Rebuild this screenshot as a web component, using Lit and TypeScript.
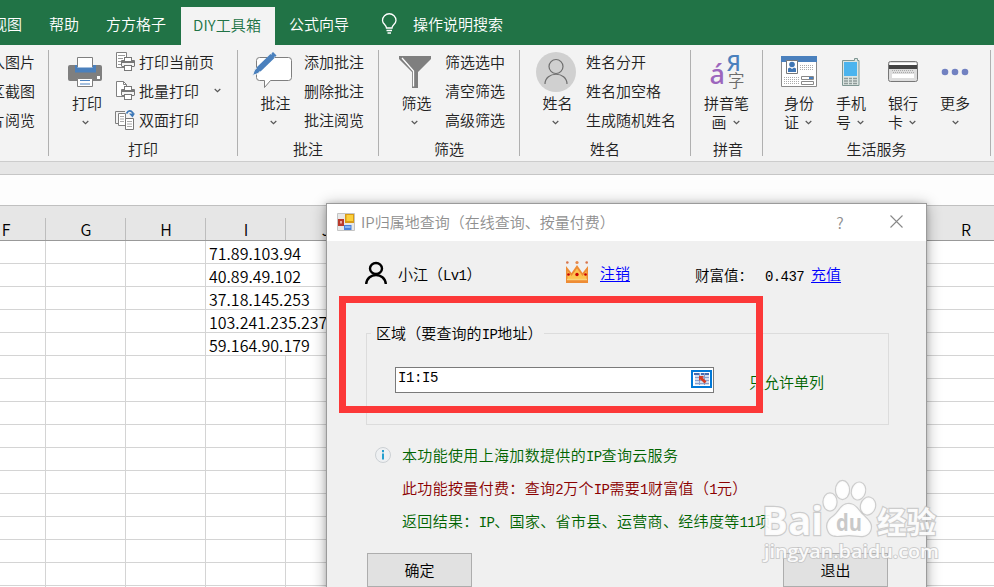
import { LitElement, html, svg, css } from "lit";
import { customElement } from "lit/decorators.js";

const chevron = html`<svg class="chev" width="7" height="5" viewBox="0 0 7 5"><path d="M.7 1 3.5 3.6 6.3 1" fill="none" stroke="#555" stroke-width="1.2"/></svg>`;

// Wraps half-width runs so they can take the narrower monospace face.
const mixed = (s: string) =>
  s.split(/([\x21-\x7e]+)/).map((p, i) => (i % 2 ? html`<span class="half">${p}</span>` : p));

const miniPrinter = svg`<path d="M5.500 14.500V8.500h13v6" fill="#f3f3f3" stroke="#777"/><rect x="8.500" y="5.500" width="7" height="4" fill="#fff" stroke="#777"/><path d="M5 9h14v2H5z" fill="#777"/><path d="M6 14.500h3m6 0h3" stroke="#777"/><rect x="8.500" y="13.500" width="7" height="5" fill="#fff" stroke="#777"/>`;
const pageIcon = html`<svg width="20" height="20" viewBox="0 0 20 20"><path d="M.5.500h10V15.500H.5z" fill="#fff" stroke="#808080"/><path d="M2 3.500h7M2 6.500h5M2 9.500h3M2 12.500h3" stroke="#999"/>${miniPrinter}</svg>`;
const batchIcon = html`<svg width="20" height="20" viewBox="0 0 20 20"><path d="M.5.500h7l3 3v12H.5z" fill="#fff" stroke="#808080"/><path d="M7.500.500v3h3" fill="none" stroke="#808080"/>${miniPrinter}</svg>`;
const duplexIcon = html`<svg width="20" height="20" viewBox="0 0 20 20"><path d="M9 1.500H-.5v12H2" fill="none" stroke="#808080"/><path d="M2.500 3.500h7v12h-7z" fill="#fff" stroke="#808080"/><path d="M4 6.500h4M4 9h4M4 11.500h4" stroke="#aaa"/><path d="M10.500 3.500q3-5 6.500-.5v2" fill="none" stroke="#3c78b8" stroke-width="1.600"/><path d="m13 3.500 3.500 4 2.500-4z" fill="#3c78b8"/><path d="M9.500 8.500h8v11h-8z" fill="#fff" stroke="#777"/><path d="M11 11.500h5M11 14h5M11 16.500h5" stroke="#aaa"/></svg>`;

const printIcon = html`<svg width="62" height="48" viewBox="54 45 62 48"><rect x="68" y="65" width="34" height="16" rx="2" fill="#7f7f7f"/><path d="M75 65h21v7.500H75z" fill="#4a80bd"/><path d="M77.500 57.500h15V67.500h-15z" fill="#fff"/><path d="M77.500 67v-9.500h15V67" fill="none" stroke="#7f7f7f"/><rect x="97" y="76" width="3" height="3" fill="#fff"/><path d="M77.500 78.500h15v8h-15z" fill="#fff" stroke="#7f7f7f"/><path d="M80 80.500h10M80 84h10" stroke="#4a80bd" stroke-width="1.200"/></svg>`;
const noteIcon = html`<svg width="61" height="48" viewBox="243 45 61 48"><path d="M259.500 57.500h29q3 0 3 3v17q0 3-3 3h-18l-6 7v-7h-5q-3 0-3-3v-17q0-3 3-3z" fill="#fff" stroke="#7f7f7f"/><path d="m273 52.500 3 3-18 18-5.500 2 2-5.500z" fill="#4a80bd" stroke="#f3f3f3"/><path d="m256.500 67.500 14-13.500 4 4-14 13.500z" fill="#4a80bd"/><path d="m271.500 53.500 1.500-1.500 3.500 3.500-1.500 1.500z" fill="#4a80bd"/></svg>`;
const filterIcon = html`<svg width="61" height="48" viewBox="384 45 61 48"><path d="M399 56h32v3l-13 13v16h-6V72l-13-13z" fill="#7f7f7f"/><path d="m402 58 11.500 13v15.500" fill="none" stroke="#fff" stroke-width="1.300"/></svg>`;
const nameIcon = html`<svg width="61" height="48" viewBox="525 45 61 48"><circle cx="556" cy="72" r="20" fill="#d0d0d0"/><g fill="none" stroke="#6e6e6e" stroke-width="1.200"><circle cx="556" cy="66.500" r="7"/><path d="M545 84c0-13 22-13 22 0"/></g></svg>`;
const pinyinIcon = html`<svg class="glyphs" width="52" height="48" viewBox="700.500 45 52 48"><text x="709" y="83.500" font-size="27" font-weight="500" fill="#9c66bd">á</text><text x="726" y="71" font-size="22" font-weight="500" fill="#4a80bd">Я</text><text x="727.500" y="86.500" font-size="16.500" fill="#6c6c6c">字</text></svg>`;
const idIcon = html`<svg width="52" height="48" viewBox="773 45 52 48"><path d="M781.500 56.500h35v30h-35z" fill="#fff" stroke="#888"/><path d="M781 56h36v6h-36z" fill="#4a80bd"/><path d="M786.500 60.500h11v13h-11z" fill="#fff" stroke="#777"/><circle cx="792" cy="64.500" r="2.800" fill="#3f76b5"/><path d="M788 72v-3.500l2-1 2 1.500 2-1.500 2 1V72z" fill="#3f76b5"/><path d="M800 65.500h14M800 67.500h14M800 69.500h14M784 77.500h15M784 79.500h15M784 81.500h15M784 83.500h15" stroke="#aaa" stroke-dasharray="1 1"/><path d="M801.500 76.500h12v3h-12zM801.500 81.500h12v3h-12z" fill="#fff" stroke="#888"/><path d="M809 77h4v2h-4z" fill="#4a80bd"/></svg>`;
const phoneIcon = html`<svg width="52" height="48" viewBox="825 45 52 48"><path d="M842.500 60.500h12v-2h3v2h1.500v25h-16.500z" fill="#dce5e2" stroke="#7e9692"/><path d="M844 62h13v14h-13z" fill="#4bb4ee"/><path d="M844 78.500h4m1 0h3m1 0h4M844 81h4m1 0h3m1 0h4M844 83.500h4m1 0h3m1 0h4" stroke="#8e9b99" stroke-width="1.500"/></svg>`;
const cardIcon = html`<svg width="52" height="48" viewBox="877 45 52 48"><rect x="888.500" y="61.500" width="29" height="20" rx="2" fill="#ddd" stroke="#777"/><path d="M890 63h26v2h-26z" fill="#fff"/><path d="M889 65h28v4h-28z" fill="#444"/><path d="M892 70.500h22M893 72.500h22" stroke="#aaa" stroke-dasharray="1 1"/><path d="M892 74h22v4h-22z" fill="#fff"/></svg>`;
const moreIcon = html`<svg width="52" height="48" viewBox="929 45 52 48"><g fill="#7181c1"><circle cx="945" cy="72" r="3.300"/><circle cx="955" cy="72" r="3.300"/><circle cx="965" cy="72" r="3.300"/></g></svg>`;

const ips = ["71.89.103.94", "40.89.49.102", "37.18.145.253", "103.241.235.237", "59.164.90.179"];

@customElement("app-root")
export class AppRoot extends LitElement {
  static styles = css`
    :host { display: block; position: relative; width: 994px; height: 587px; overflow: hidden; background: #fff; font: 350 15px/20px "Noto Sans CJK SC", sans-serif; color: #222; }
    * { box-sizing: border-box; }
    svg { display: block; flex: none; overflow: visible; }
    .tabs { height: 45px; background: #217346; color: #fff; display: flex; align-items: center; white-space: nowrap; padding-top: 3px; }
    .tab { margin-right: 27px; }
    .tab.first { margin-left: -8px; }
    .tab.beforeActive { margin-right: 15px; }
    .tab.active { align-self: flex-end; width: 94px; height: 38px; line-height: 35px; margin-right: 14px; padding-right: 2px; background: #f3f3f3; color: #217346; text-align: center; letter-spacing: .1px; }
    .tab.wizard { margin-right: 33px; }
    .bulb { margin-right: 15px; }
    .ribbon { display: flex; height: 117px; background: #f3f3f3; border-bottom: 1px solid #ccc; }
    .group { display: flex; flex-direction: column; flex: none; background: linear-gradient(#b0b0b0, #b0b0b0) right 5px / 1px 106px no-repeat; }
    .content { display: flex; height: 92px; padding-left: 5px; }
    .caption { height: 24px; line-height: 24px; text-align: center; padding-right: 1px; }
    .g0 { width: 49px; overflow: hidden; } .g1 { width: 189px; } .g2, .g3 { width: 141px; } .g4 { width: 171px; } .g5 { width: 72px; } .g6 { width: 228px; }
    .g0 .small { margin-right: 14px; }
    .g0 .content { justify-content: flex-end; padding: 0; }
    .g5 .content { padding-left: 9.500px; } .g6 .content { padding-left: 10px; }
    .g5 .caption { padding: 0 0 0 2px; }
    .big { width: 61px; display: flex; flex-direction: column; align-items: center; }
    .big.print { width: 62px; }
    .big .name { height: 20px; padding-left: 4px; white-space: nowrap; }
    .big .arrow { height: 18px; display: flex; align-items: center; }
    .big.duo { width: 52px; }
    .big.duo .name { padding: 0; }
    .big.duo .arrow { width: 30px; gap: 6px; }
    .big.plain { width: 52px; }
    .big.plain .name { padding: 0; }
    .small { padding-top: 2px; flex: none; }
    .row { height: 29px; display: flex; align-items: center; white-space: nowrap; gap: 3px; }
    .row .chev { margin-left: 12px; }
    .strip { height: 13px; background: #e6e6e6; border-bottom: 1px solid #c6c6c6; }
    .formula { height: 31px; background: #fdfdfd; border-bottom: 1px solid #c0c0c0; }
    .sheet { width: 1120px; margin-left: -34px; color: #000; font-size: 16px; }
    .heads { display: grid; grid-template-columns: repeat(14, 80px); height: 35px; padding-top: 12px; background: #e6e6e6; border-bottom: 1px solid #999; }
    .head { line-height: 22px; padding-left: 1px; text-align: center; border-right: 1px solid #bdbdbd; }
    .line { display: grid; grid-template-columns: repeat(14, 80px); height: 23px; border-bottom: 1px solid #d4d4d4; }
    .cell { border-right: 1px solid #d4d4d4; line-height: 24px; padding-left: 3px; white-space: nowrap; }
    .cell.spill { border-right-color: transparent; }
    .dialog { position: absolute; left: 326px; top: 203px; width: 601px; height: 420px; border: 1px solid #9b9b9b; background: #f0f0f0; box-shadow: 0 2px 14px rgba(0,0,0,.32), 0 0 5px rgba(0,0,0,.15); color: #000; }
    .half { font: 400 14px/15px "Liberation Mono", monospace; letter-spacing: -.6px; }
    .title { display: flex; align-items: center; height: 37px; padding: 0 23px 2px 10px; background: #fff; color: #8f8f8f; }
    .titletext { margin-left: 6px; flex: 1; }
    .help { font-size: 16px; width: 10px; margin-right: 45px; text-align: center; }
    .account { display: flex; align-items: center; height: 65px; padding-left: 38px; }
    .user { margin-left: 11px; width: 168px; }
    .avatar { margin-top: -2px; }
    a { color: #00f; text-decoration: underline; text-underline-offset: 2px; }
    .crown { margin-right: 12px; margin-top: -4px; }
    .logout { width: 95px; margin-top: -1px; }
    .wealth { width: 70px; padding-top: 3px; font-size: 14.500px; }
    .amount { margin-right: 7px; padding-top: 2px; }
    fieldset { display: flex; align-items: center; margin: 17px 37px 0 39px; padding: 0 0 7px 28px; border: 1px solid #dcdcdc; height: 102px; min-width: 0; }
    legend { margin-left: -24px; padding: 0 1px 0 5px; line-height: 20px; letter-spacing: .1px; }
    .range { display: flex; align-items: center; width: 319px; height: 26px; border: 1px solid #7a7a7a; background: #fff; padding-left: 2px; }
    .range .half { flex: 1; margin-top: -3px; letter-spacing: -.4px; }
    .picker { margin: -3px 1px 0 0; }
    .hint { color: #006400; margin-left: 35px; margin-top: 3px; }
    .notes { display: grid; grid-template-columns: 27px auto; grid-auto-rows: 33px; align-items: center; padding: 13px 0 0 48px; letter-spacing: .33px; white-space: nowrap; color: #006400; }
    .notes .text { grid-column: 2; }
    .notes .fee { color: #8b0000; }
    .notes .half { letter-spacing: -.6px; }
    .buttons { display: flex; justify-content: space-between; padding: 16px 38px 0 40px; }
    .btn { width: 105px; height: 34px; line-height: 31px; border: 1px solid #adadad; background: #e1e1e1; text-align: center; }
    .mark { position: absolute; left: 339px; top: 296px; width: 424px; height: 117px; border: 7px solid #fc3838; }
    .watermark { position: absolute; left: 755px; top: 475px; }
    .watermark text { font-family: "Open Sans", "Noto Sans CJK SC", sans-serif; }
    .glyphs text { font-family: "Noto Sans", "Noto Sans CJK SC", sans-serif; }
  `;

  private big(icon: unknown, name: string, kind = "", second = "") {
    return html`<div class="big ${kind}">${icon}<div class="name">${name}</div><div class="arrow">${second ? html`<span>${second}</span>` : ""}${chevron}</div></div>`;
  }
  private small(rows: unknown[]) {
    return html`<div class="small">${rows.map((r) => html`<div class="row">${r}</div>`)}</div>`;
  }
  private group(n: number, caption: string, body: unknown) {
    return html`<div class="group g${n}"><div class="content">${body}</div><div class="caption">${caption}</div></div>`;
  }

  render() {
    const heads = ["F", "G", "H", "I", "J", "", "", "", "", "", "", ""];
    return html`
      <div class="tabs">
        <span class="tab first">视图</span><span class="tab">帮助</span><span class="tab beforeActive">方方格子</span>
        <span class="tab active">DIY工具箱</span><span class="tab wizard">公式向导</span>
        <svg class="bulb" width="16" height="20" viewBox="0.500 0 16 20"><path d="M5 14c0-3-4-4-4-7.500a6.600 6.600 0 0 1 13.500 0C14.500 10 10.500 11 10.500 14zM5 16.500h5.500M6 19h3.500" fill="none" stroke="#fff" stroke-width="1.300"/></svg>
        <span>操作说明搜索</span>
      </div>
      <div class="ribbon">
        ${this.group(0, "", this.small(["插入图片", "选区截图", "图片阅览"]))}
        ${this.group(1, "打印", html`${this.big(printIcon, "打印", "print")}${this.small([
          html`${pageIcon}打印当前页`, html`${batchIcon}批量打印 ${chevron}`, html`${duplexIcon}双面打印`])}`)}
        ${this.group(2, "批注", html`${this.big(noteIcon, "批注")}${this.small(["添加批注", "删除批注", "批注阅览"])}`)}
        ${this.group(3, "筛选", html`${this.big(filterIcon, "筛选")}${this.small(["筛选选中", "清空筛选", "高级筛选"])}`)}
        ${this.group(4, "姓名", html`${this.big(nameIcon, "姓名")}${this.small(["姓名分开", "姓名加空格", "生成随机姓名"])}`)}
        ${this.group(5, "拼音", this.big(pinyinIcon, "拼音笔", "duo", "画"))}
        ${this.group(6, "生活服务", html`${this.big(idIcon, "身份", "duo", "证")}${this.big(phoneIcon, "手机", "duo", "号")}${this.big(cardIcon, "银行", "duo", "卡")}${this.big(moreIcon, "更多", "plain")}`)}
      </div>
      <div class="strip"></div>
      <div class="formula"></div>
      <div class="sheet">
        <div class="heads">${heads.map((h) => html`<div class="head">${h}</div>`)}<div class="head">R</div></div>
        ${Array.from({ length: 16 }, (_, r) => html`<div class="line">${Array.from({ length: 12 }, (_, c) =>
          html`<div class="cell ${c === 3 && r < 5 ? "spill" : ""}">${c === 3 ? ips[r] ?? "" : ""}</div>`)}</div>`)}
      </div>
      <div class="dialog">
        <div class="title">
          <svg width="18" height="18" viewBox="0 0 18 18"><path d="M.5.500h17v17H.5z" fill="#e8e8e8" stroke="#c4c4c4"/><path d="M1 6h6v7H1z" fill="#b93a2c"/><path d="M3 8h2v2.500H3z" fill="#f0a79c"/><path d="M8 1h9v9H8z" fill="#d89b16"/><path d="M9.500 2h6.500v6H9.500z" fill="#fcd03c"/><path d="M7 12h7.500v5H7z" fill="#4a80d8"/><path d="M8 13h5.500v2H8z" fill="#86b4f4"/></svg>
          <span class="titletext">IP归属地查询（在线查询、按量付费）</span>
          <span class="help">?</span>
          <svg width="13" height="13" viewBox="0 0 13 13"><path d="m.5.500 12 12m0-12-12 12" stroke="#888" stroke-width="1.100"/></svg>
        </div>
        <div class="account">
          <svg class="avatar" width="22" height="22" viewBox="0 0 22 22"><g fill="none" stroke="#000" stroke-width="2.400"><ellipse cx="11" cy="6.500" rx="6" ry="5.500"/><path d="M1.200 22c1-12 18.600-12 19.600 0"/></g></svg>
          <span class="user">${mixed("小江（Lv1）")}</span>
          <svg class="crown" width="22" height="22" viewBox="0 0 22 22"><path d="m0 5 5.500 7L11 4l5.500 8L22 5v17H0z" fill="#ee8c35"/><path d="m1.500 10 4 5L11 7.500l5.500 7.500 4-5v8h-19z" fill="#fdc34f"/><path d="M1 18.500h20" stroke="#fbd277" stroke-width="1.500"/><circle cx="11" cy="13.500" r="1.700" fill="#c90000"/><circle cx="2.500" cy="13.500" r="1.300" fill="#c90000"/><circle cx="19.500" cy="13.500" r="1.300" fill="#c90000"/><circle cx="1.300" cy="1.500" r="1.300" fill="#d8744a"/><circle cx="11" cy="1.500" r="1.600" fill="#e6874a"/><circle cx="20.700" cy="1.500" r="1.300" fill="#d8744a"/></svg>
          <span class="logout"><a>注销</a></span>
          <span class="wealth">财富值：</span><span class="amount">${mixed("0.437")}</span><a>充值</a>
        </div>
        <fieldset>
          <legend>${mixed("区域（要查询的IP地址）")}</legend>
          <div class="range"><span class="half">I1:I5</span>
            <svg class="picker" width="21" height="18" viewBox="0 0 21 18"><path d="M1 1h19v16H1z" fill="#fff" stroke="#0078d7" stroke-width="2"/><path d="M4 3h14v12H4z" fill="#d4deef"/><path d="M3 4h6m1 0h8" stroke="#456bb0" stroke-width="2"/><path d="M4 7.500h14M4 10.500h14M4 13.500h14M8.500 3v12M13.500 3v12" stroke="#8ba0cb"/><path d="M8 6h5l-1.500 1.500 4 4-2 2-4-4L8 11z" fill="#d53c24"/></svg>
          </div>
          <span class="hint">只允许单列</span>
        </fieldset>
        <div class="notes">
          <svg width="16" height="16" viewBox="0 0 16 16"><circle cx="8" cy="8" r="7.500" fill="#eef0f2" stroke="#ccd0d4"/><path d="M8 3v2.200M8 6.500v6" stroke="#25a0cf" stroke-width="2"/></svg>
          <span class="text">${mixed("本功能使用上海加数提供的IP查询云服务")}</span>
          <span class="text fee">${mixed("此功能按量付费：查询2万个IP需要1财富值（1元）")}</span>
          <span class="text">${mixed("返回结果：IP、国家、省市县、运营商、经纬度等11项")}</span>
        </div>
        <div class="buttons"><div class="btn">确定</div><div class="btn">退出</div></div>
      </div>
      <div class="mark"></div>
      <svg class="watermark" width="200" height="105" viewBox="755 475 200 105">
        <g fill="#fff" fill-opacity=".92" stroke="#bdbdbd" stroke-opacity=".7" stroke-width="2.400" paint-order="stroke">
          <text x="762" y="535" font-size="40" font-weight="700" textLength="61" lengthAdjust="spacingAndGlyphs">Bai</text>
          <ellipse cx="830" cy="502" rx="6.500" ry="8.500"/><ellipse cx="842.500" cy="490" rx="6.500" ry="9"/><ellipse cx="858.500" cy="491" rx="6.500" ry="8.500" transform="rotate(15 858.500 491)"/><ellipse cx="868" cy="506" rx="7" ry="8.500" transform="rotate(15 868 506)"/>
          <path d="M849 504c-8 0-9 7-15 12-6 4-8 9-6 14 3 9 13 5 21 5s17 4 21-4c3-7-2-11-7-16-5-4-7-11-14-11z"/>
          <text x="877" y="533" font-size="30" font-weight="700" textLength="59" lengthAdjust="spacingAndGlyphs">经验</text>
          <text x="764" y="557.500" font-size="18" font-weight="600" stroke-width="1.800" textLength="175" lengthAdjust="spacingAndGlyphs">jingyan.baidu.com</text>
        </g>
        <text x="836" y="531" font-size="23" font-weight="700" fill="#c9c9c9" textLength="26" lengthAdjust="spacingAndGlyphs">du</text>
      </svg>
    `;
  }
}
